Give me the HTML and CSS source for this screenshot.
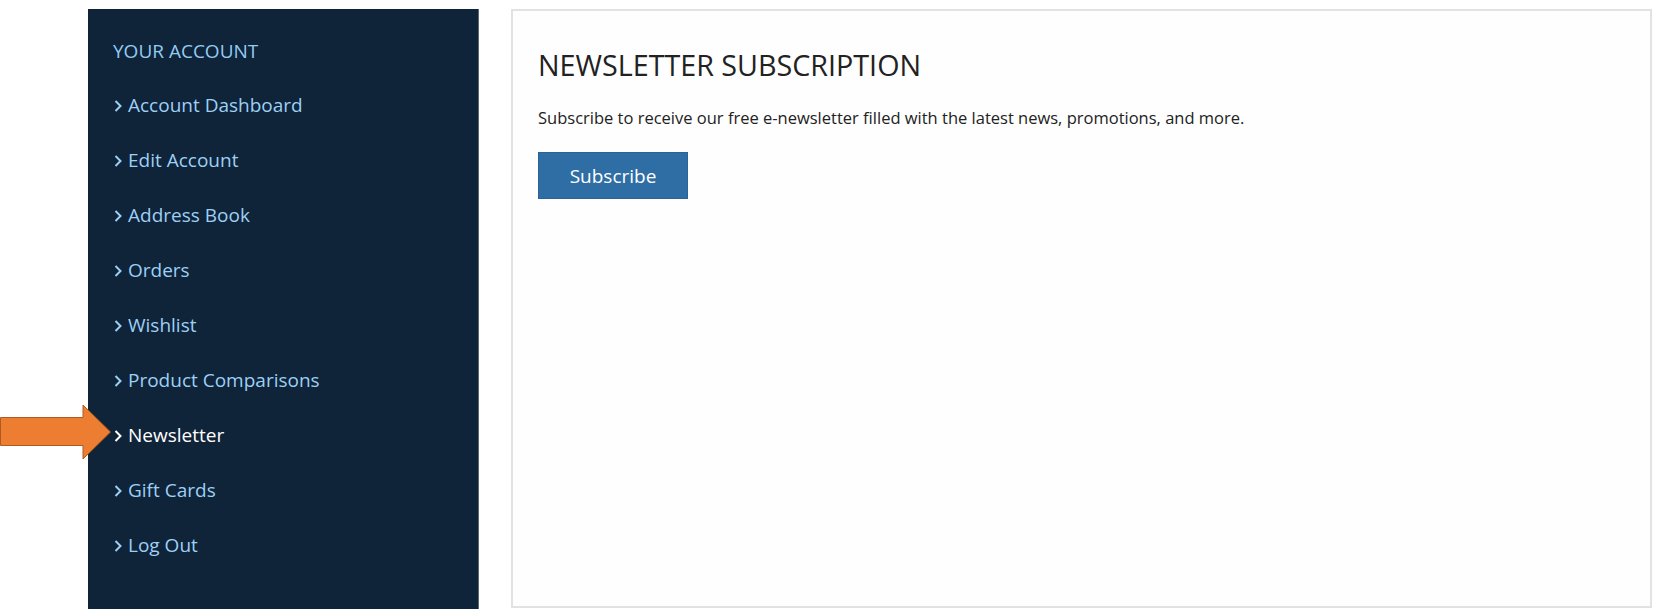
FILE: index.html
```html
<!DOCTYPE html>
<html lang="en">
<head>
    <meta charset="UTF-8">
    <meta name="viewport" content="width=device-width, initial-scale=1.0">
    <title>Newsletter Subscription</title>
    <link rel="stylesheet" href="styles.css">
</head>
<body>
    <div class="account-page">
        <!-- Account navigation -->
        <aside class="account-nav">
            <h3 class="account-nav-title">YOUR ACCOUNT</h3>
            <ul class="account-links">
                <li><a href="#"><svg class="chevron" viewBox="0 0 8 12"><polyline points="1.5,1 6.5,6 1.5,11"/></svg>Account Dashboard</a></li>
                <li><a href="#"><svg class="chevron" viewBox="0 0 8 12"><polyline points="1.5,1 6.5,6 1.5,11"/></svg>Edit Account</a></li>
                <li><a href="#"><svg class="chevron" viewBox="0 0 8 12"><polyline points="1.5,1 6.5,6 1.5,11"/></svg>Address Book</a></li>
                <li><a href="#"><svg class="chevron" viewBox="0 0 8 12"><polyline points="1.5,1 6.5,6 1.5,11"/></svg>Orders</a></li>
                <li><a href="#"><svg class="chevron" viewBox="0 0 8 12"><polyline points="1.5,1 6.5,6 1.5,11"/></svg>Wishlist</a></li>
                <li><a href="#"><svg class="chevron" viewBox="0 0 8 12"><polyline points="1.5,1 6.5,6 1.5,11"/></svg>Product Comparisons</a></li>
                <li class="active"><a href="#"><svg class="chevron" viewBox="0 0 8 12"><polyline points="1.5,1 6.5,6 1.5,11"/></svg>Newsletter</a></li>
                <li><a href="#"><svg class="chevron" viewBox="0 0 8 12"><polyline points="1.5,1 6.5,6 1.5,11"/></svg>Gift Cards</a></li>
                <li><a href="#"><svg class="chevron" viewBox="0 0 8 12"><polyline points="1.5,1 6.5,6 1.5,11"/></svg>Log Out</a></li>
            </ul>
        </aside>

        <!-- Newsletter panel -->
        <main class="account-content">
            <h1>NEWSLETTER SUBSCRIPTION</h1>
            <p>Subscribe to receive our free e-newsletter filled with the latest news, promotions, and more.</p>
            <button class="subscribe-button">Subscribe</button>
        </main>
    </div>

    <!-- Callout pointing at the current menu item -->
    <svg class="callout-arrow" viewBox="0 0 112 56">
        <polygon points="0.5,13.5 83,13.5 83,1 110.5,28 83,55 83,41.5 0.5,41.5"/>
    </svg>
</body>
</html>
```

FILE: styles.css
```css
body {
    font-family: "Open Sans", "Segoe UI", sans-serif;
    margin: 0;
    padding: 0;
    background-color: #ffffff;
}
.account-page {
    display: flex;
    gap: 32px;
    padding: 9px 0 0 88px;
}
/* Account Navigation */
.account-nav {
    box-sizing: border-box;
    width: 391px;
    height: 600px;
    padding: 15px 0 0 25px;
    background-color: #0f2339;
    border-right: 1px solid #5a6878;
}
.account-nav-title {
    margin: 0;
    font-size: 19px;
    font-weight: 400;
    line-height: 54px;
    color: #94cbf1;
}
.account-links {
    list-style: none;
    margin: 0;
    padding: 0;
}
.account-links li {
    line-height: 55px;
    font-size: 19px;
}
.account-links a {
    color: #9dd0f5;
    text-decoration: none;
}
.account-links .active a {
    color: #ffffff;
}
.chevron {
    width: 8px;
    height: 12px;
    margin: 0 6px 0 1px;
    fill: none;
    stroke: currentColor;
    stroke-width: 2;
}
/* Newsletter Panel */
.account-content {
    box-sizing: border-box;
    width: 1141px;
    height: 599px;
    padding: 36px 25px;
    border: 2px solid #e2e2e2;
    background-color: #fefefe;
}
.account-content h1 {
    margin: 0 0 25px;
    font-size: 28.7px;
    font-weight: 400;
    line-height: 35px;
    color: #222222;
}
.account-content p {
    margin: 0 0 23px;
    font-size: 16.5px;
    line-height: 22px;
    color: #222222;
}
.subscribe-button {
    width: 150px;
    height: 47px;
    font-family: inherit;
    font-size: 19px;
    color: #ffffff;
    background-color: #2f6ea5;
    border: 1px solid #2a6399;
    border-radius: 0;
    cursor: pointer;
}
/* Callout Arrow */
.callout-arrow {
    position: absolute;
    left: 0;
    top: 404px;
    width: 112px;
    height: 56px;
}
.callout-arrow polygon {
    fill: #ed7d31;
    stroke: #ae5a21;
    stroke-width: 1;
}
```
